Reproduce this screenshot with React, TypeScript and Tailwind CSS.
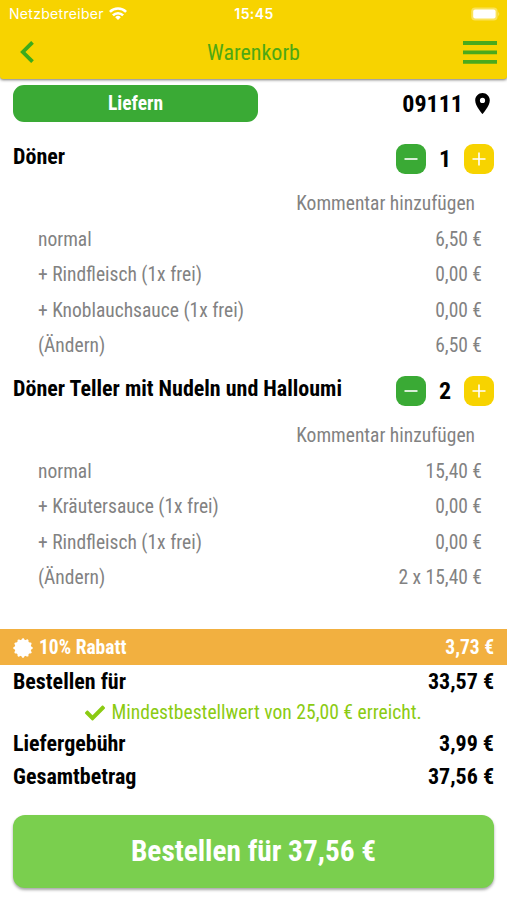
import { FaCheck } from "react-icons/fa";
import { MdLocationOn } from "react-icons/md";

type Line = { label: string; price: string };
type Item = { name: string; count: number; lines: Line[] };

const items: Item[] = [
  {
    name: "Döner",
    count: 1,
    lines: [
      { label: "normal", price: "6,50 €" },
      { label: "+ Rindfleisch (1x frei)", price: "0,00 €" },
      { label: "+ Knoblauchsauce (1x frei)", price: "0,00 €" },
      { label: "(Ändern)", price: "6,50 €" },
    ],
  },
  {
    name: "Döner Teller mit Nudeln und Halloumi",
    count: 2,
    lines: [
      { label: "normal", price: "15,40 €" },
      { label: "+ Kräutersauce (1x frei)", price: "0,00 €" },
      { label: "+ Rindfleisch (1x frei)", price: "0,00 €" },
      { label: "(Ändern)", price: "2 x 15,40 €" },
    ],
  },
];

function StatusBar() {
  return (
    <div className="grid h-[27px] grid-cols-3 items-center pr-[6px] pl-[9px] font-['Inter',sans-serif] text-[14px] text-white">
      <div className="flex items-center gap-[5px]">
        <span className="tracking-[0.3px]">Netzbetreiber</span>
        <svg viewBox="0 0 18 13" className="h-[13px] w-[18px]" fill="none" stroke="currentColor" strokeWidth="2.6">
          <path d="M0.9 4.9a11.5 11.5 0 0 1 16.2 0" />
          <path d="M3.9 8.3a7.2 7.2 0 0 1 10.2 0" />
          <path d="M9 13 6.2 10.2a4 4 0 0 1 5.6 0z" fill="currentColor" stroke="none" />
        </svg>
      </div>
      <span className="-ml-[2px] text-center font-semibold tracking-[0.4px]">15:45</span>
      <svg viewBox="0 0 30 14" className="h-[14px] w-[30px] justify-self-end">
        <rect x="0.2" y="0.6" width="26.4" height="12.8" rx="4" fill="#fff" opacity="0.35" />
        <rect x="2.2" y="2.4" width="22.4" height="9.2" rx="2" fill="#fff" />
        <path d="M27.4 4.6q1.8 2.4 0 4.8z" fill="#fff" opacity="0.5" />
      </svg>
    </div>
  );
}

function Header() {
  return (
    <header className="h-[79px] rounded-b-[3px] bg-[#f7d300] shadow-[0_1px_3px_rgba(0,0,0,0.55)]">
      <StatusBar />
      <div className="grid h-[50px] grid-cols-3 items-center pr-[10px] pl-[20px]">
        <svg viewBox="0 0 14 22" className="h-[22px] w-[14px]" fill="none" stroke="#3dab1c" strokeWidth="3.8">
          <path d="M12.5 1.3 2.8 11l9.7 9.7" />
        </svg>
        <h1 className="-ml-[10px] text-center text-[22px] text-[#4ea813]">Warenkorb</h1>
        <svg viewBox="0 0 34 23" className="h-[23px] w-[34px] justify-self-end" stroke="#4aaa1c" strokeWidth="3.8">
          <path d="M0 2h34M0 11.4h34M0 20.8h34" />
        </svg>
      </div>
    </header>
  );
}

function Counter({ count }: { count: number }) {
  return (
    <div className="flex items-center">
      <button className="flex size-[30px] items-center justify-center rounded-[9px] bg-[#3aaa35]">
        <svg viewBox="0 0 14 14" className="size-3.5" stroke="#fff" strokeWidth="1.6">
          <path d="M0.5 7h13" />
        </svg>
      </button>
      <span className="w-[38px] text-center text-[24px] leading-[30px] font-bold">{count}</span>
      <button className="flex size-[30px] items-center justify-center rounded-[9px] bg-[#f7d300]">
        <svg viewBox="0 0 14 14" className="size-3.5" stroke="#fff" strokeWidth="1.6">
          <path d="M0.5 7h13M7 0.5v13" />
        </svg>
      </button>
    </div>
  );
}

function CartItem({ item }: { item: Item }) {
  return (
    <section className="h-[232px]">
      <div className="flex h-[53px] items-start justify-between pr-[13px] pl-[13px]">
        <h2 className="text-[22px] leading-[25px] font-bold">{item.name}</h2>
        <Counter count={item.count} />
      </div>
      <div className="text-[19.5px] leading-[35.4px] text-[#828282]">
        <div className="-mt-[10.6px] pr-[32px] text-right">Kommentar hinzufügen</div>
        {item.lines.map((line) => (
          <div key={line.label} className="flex justify-between pr-[25px] pl-[38px]">
            <span>{line.label}</span>
            <span>{line.price}</span>
          </div>
        ))}
      </div>
    </section>
  );
}

// scalloped seal in front of the discount label
function Seal() {
  return (
    <svg viewBox="0 0 20 20" className="size-[20px]" fill="#fff">
      <circle cx="10" cy="10" r="8.2" />
      <g stroke="#fff" strokeWidth="2.4" strokeLinejoin="round">
        <path d="M10 1.4 17.4 14.3H2.6z" />
        <path d="M10 18.6 2.6 5.7h14.8z" />
        <path d="M18.6 10 5.7 17.4V2.6z" />
        <path d="M1.4 10 14.3 2.6v14.8z" />
      </g>
    </svg>
  );
}

function TotalRow({ label, value }: { label: string; value: string }) {
  return (
    <div className="flex h-[33px] items-center justify-between pr-[13px] pl-[13px] text-[22px] font-bold">
      <span>{label}</span>
      <span>{value}</span>
    </div>
  );
}

export default function App() {
  return (
    <div className="flex h-[900px] w-[507px] flex-col overflow-hidden bg-white font-['Roboto_Condensed','Roboto',sans-serif] text-black [font-stretch:75%]">
      <Header />
      <div className="flex items-start justify-between pt-[6px] pr-[12px] pl-[13px]">
        <button className="h-[37px] w-[245px] rounded-[11px] bg-[#3aaa35] text-[19.5px] font-bold text-white">Liefern</button>
        <div className="flex h-[37px] items-center gap-[7px] text-[24px] font-bold">
          <span>09111</span>
          <MdLocationOn className="size-[25px]" />
        </div>
      </div>
      <main className="mt-[22px] h-[485px]">
        {items.map((item) => (
          <CartItem key={item.name} item={item} />
        ))}
      </main>
      <div className="flex h-[36px] items-center justify-between bg-[#f2b040] pt-px pr-[13px] pl-[13px] text-[19.5px] font-bold text-white">
        <span className="flex items-center gap-[6px]">
          <Seal />
          10% Rabatt
        </span>
        <span>3,73 €</span>
      </div>
      <TotalRow label="Bestellen für" value="33,57 €" />
      <div className="flex h-[29px] items-center justify-center gap-1.5 pt-px text-[19.6px] text-[#8bcb12]">
        <FaCheck className="size-[20px]" />
        Mindestbestellwert von 25,00 € erreicht.
      </div>
      <TotalRow label="Liefergebühr" value="3,99 €" />
      <TotalRow label="Gesamtbetrag" value="37,56 €" />
      <button className="mx-[13px] mt-[22px] h-[73px] rounded-[12px] bg-[#7acf4e] text-[29.3px] font-bold text-white shadow-[0_2px_3px_rgba(0,0,0,0.35)]">
        Bestellen für 37,56 €
      </button>
    </div>
  );
}
